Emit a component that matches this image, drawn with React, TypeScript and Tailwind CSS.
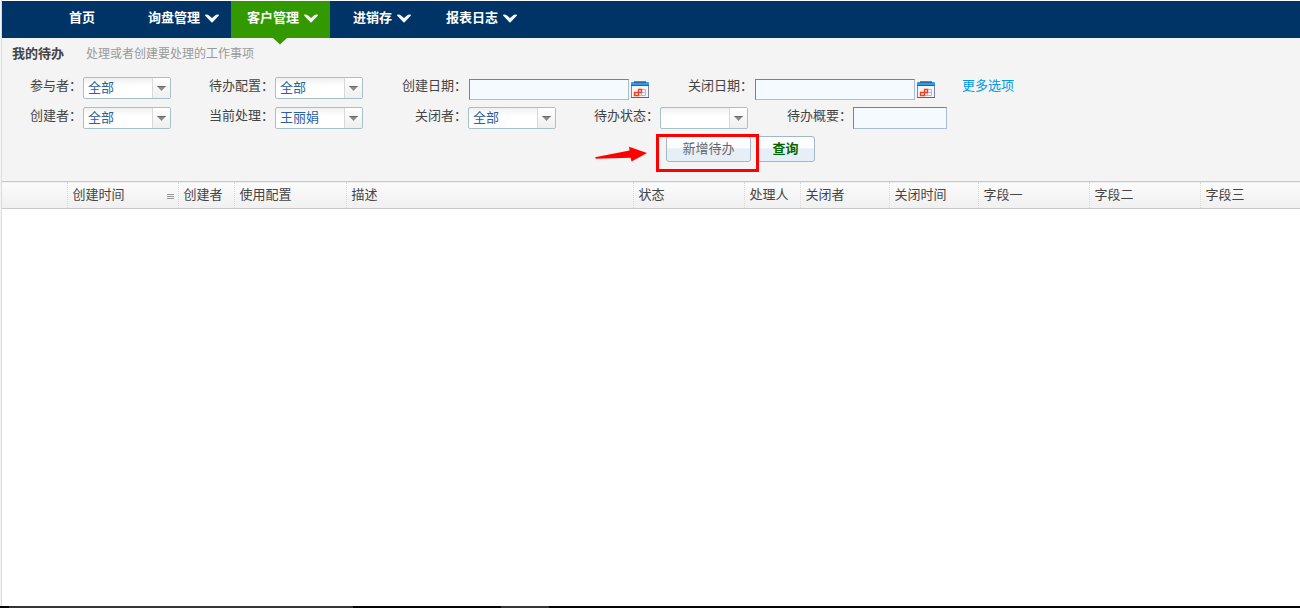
import { useState } from "react";
import type { ReactNode } from "react";

const navItems = [
    { label: "首页", menu: false, active: false, className: "w-[79px] pl-4" },
    { label: "询盘管理", menu: true, active: false, className: "w-[99px] pl-4" },
    { label: "客户管理", menu: true, active: true, className: "w-[99px] pl-4 bg-[#339900]" },
    { label: "进销存", menu: true, active: false, className: "w-[93px] pl-[23px]" },
    { label: "报表日志", menu: true, active: false, className: "w-[106px] pl-[23px]" },
];

const columns = [
    { label: "", width: "w-[65px]" },
    { label: "创建时间", width: "w-[111px]", menu: true },
    { label: "创建者", width: "w-[56px]" },
    { label: "使用配置", width: "w-[112px]" },
    { label: "描述", width: "w-[287px]" },
    { label: "状态", width: "w-[111px]" },
    { label: "处理人", width: "w-[56px]" },
    { label: "关闭者", width: "w-[89px]" },
    { label: "关闭时间", width: "w-[89px]" },
    { label: "字段一", width: "w-[111px]" },
    { label: "字段二", width: "w-[111px]" },
    { label: "字段三", width: "w-auto" },
];

const Chevron = () => (
    <svg viewBox="0 0 14 9" className="w-[14px] h-[9px]" fill="#f4f7fa">
        <path d="M0 1.4Q0 .4 1.4 .6Q3 .6 4 1.6L7 4L10 1.6Q11 .6 12.6 .6Q14 .4 14 1.4L7.6 8.2Q7 8.8 6.4 8.2Z" />
    </svg>
);

const CalendarIcon = () => (
    <svg viewBox="0 0 18 17" className="w-[18px] h-[17px]">
        <rect x="0.5" y="3.5" width="17" height="13" fill="#f3f5fa" stroke="#7f8798" />
        <rect x="0" y="1" width="18" height="4" rx="1" fill="#2a9cf0" />
        <rect x="0" y="4" width="18" height="1" fill="#1464b8" />
        <path d="M3 1h12" stroke="#3d4f66" strokeWidth="1.4" />
        <path d="M0 16.5h18" stroke="#5d6474" />
        <path d="M10.5 8.5h4v6h-7M7.5 11.5h7M10.5 8.5v6" fill="none" stroke="#b4bccb" />
        <path d="M7 8.5h3.5v3H3.5v3h4v-6" fill="none" stroke="#f4401f" strokeWidth="1.4" />
    </svg>
);

interface FieldProps {
    id: string;
    label: string;
    children: ReactNode;
}

const Field = ({ id, label, children }: FieldProps) => (
    <div className="flex items-start">
        <label htmlFor={id} className="w-[66px] pr-px text-right leading-[18px] whitespace-nowrap">
            {label}：
        </label>
        {children}
    </div>
);

interface PickerProps {
    id: string;
    options: string[];
}

const Picker = ({ id, options }: PickerProps) => {
    const [value, setValue] = useState(options[0]);

    return (
        <div className="relative w-[88px] h-[22px]">
            <select
                id={id}
                value={value}
                onChange={(e) => setValue(e.target.value)}
                className="block w-full h-full appearance-none rounded-[2px] border border-[#a6c0cc] pl-1 pr-5 leading-5 text-[#2a609c] bg-linear-to-b from-[#f0f0f0] via-white via-40% to-white outline-none"
            >
                {options.map((o) => (
                    <option key={o}>{o}</option>
                ))}
            </select>
            <span className="pointer-events-none absolute top-px right-px bottom-px w-[18px] border-l border-[#d9d9d9] bg-linear-to-b from-white to-[#efefef] flex items-center justify-center">
                <svg viewBox="0 0 9 5" className="w-[9px] h-[5px] mt-px">
                    <path d="M0 0h9L4.5 5z" fill="#8a8a8a" />
                    <path d="M0 0h9l-1 1H1z" fill="#666" />
                </svg>
            </span>
        </div>
    );
};

const inputClass =
    "border border-t-[#76838f] border-l-[#76838f] border-r-[#a9bed3] border-b-[#a9bed3] bg-[#f5faff] px-1 outline-none";

const DateInput = ({ id }: { id: string }) => (
    <div className="flex items-start pt-[2px] pl-px gap-[2px]">
        <input id={id} type="text" className={`w-[160px] h-[21px] ${inputClass}`} />
        <button type="button" aria-label="选择日期" className="pt-[2px]">
            <CalendarIcon />
        </button>
    </div>
);

const buttonClass =
    "h-[26px] rounded-[3px] border border-[#a3b5c6] bg-linear-to-b from-[#fbfdff] from-45% to-[#e6eef7] to-50%";

const App = () => {
    return (
        <div
            className="min-h-screen flex flex-col bg-white text-[13px] text-[#444]"
            style={{ fontFamily: '"Liberation Sans", "Noto Sans CJK SC", sans-serif' }}
        >
            <div className="flex-1 flex flex-col border-l border-[#f4f4f4]">
                <div className="flex-1 border-l border-[#dcdcdc] pt-px">
                    <nav className="h-[37px] bg-[#003366] pl-[51px] flex font-bold text-white">
                        {navItems.map((item) => (
                            <a
                                key={item.label}
                                href="#"
                                className={`relative shrink-0 h-full pb-[3px] flex items-center gap-[5px] ${item.className}`}
                            >
                                {item.label}
                                {item.menu && <Chevron />}
                                {item.active && (
                                    <svg viewBox="0 0 14 7" className="absolute top-full left-[42px] w-[14px] h-[7px]" fill="#339900">
                                        <path d="M0 0h14L7 6.5z" />
                                    </svg>
                                )}
                            </a>
                        ))}
                    </nav>

                    <section className="bg-[#f4f4f4] h-[143px]">
                        <header className="flex items-center pl-[10px] gap-[22px] h-8">
                            <h1 className="font-bold">我的待办</h1>
                            <p className="text-xs text-[#999]">处理或者创建要处理的工作事项</p>
                        </header>

                        <form onSubmit={(e) => e.preventDefault()} className="pl-[15px] pt-[7px]">
                            <div className="grid grid-cols-[192px_193px_286px_274px_auto] h-[30px]">
                                <Field id="member" label="参与者">
                                    <Picker id="member" options={["全部"]} />
                                </Field>
                                <Field id="config" label="待办配置">
                                    <Picker id="config" options={["全部"]} />
                                </Field>
                                <Field id="created" label="创建日期">
                                    <DateInput id="created" />
                                </Field>
                                <Field id="closed" label="关闭日期">
                                    <DateInput id="closed" />
                                </Field>
                                <a href="#" className="justify-self-start leading-[18px] text-[#0099e8]">更多选项</a>
                            </div>
                            <div className="grid grid-cols-[192px_193px_192px_193px_auto] h-[30px]">
                                <Field id="creator" label="创建者">
                                    <Picker id="creator" options={["全部"]} />
                                </Field>
                                <Field id="handler" label="当前处理">
                                    <Picker id="handler" options={["王丽娟", "全部"]} />
                                </Field>
                                <Field id="closer" label="关闭者">
                                    <Picker id="closer" options={["全部"]} />
                                </Field>
                                <Field id="status" label="待办状态">
                                    <Picker id="status" options={[""]} />
                                </Field>
                                <Field id="summary" label="待办概要">
                                    <input id="summary" type="text" className={`w-[94px] h-[22px] ${inputClass}`} />
                                </Field>
                            </div>
                            <div className="relative flex gap-[5px] pl-[649px] -mt-px">
                                <button type="button" className={`w-[85px] text-[#666] ${buttonClass}`}>新增待办</button>
                                <button type="submit" className={`w-[59px] font-bold text-[#006600] ${buttonClass}`}>查询</button>
                                {/* highlight around the add button */}
                                <span className="pointer-events-none absolute left-[639px] -top-[2px] w-[103px] h-[38px] border-3 border-[#ff0000]" />
                                <svg viewBox="0 0 52 16" className="pointer-events-none absolute left-[578px] top-[10px] w-[52px] h-[16px]" fill="#ff0000">
                                    <path d="M0 11.3L34.5 4.4L34 0.8L52 7L36.5 15.6L35.6 11.8L1 12.8Z" />
                                </svg>
                            </div>
                        </form>
                    </section>

                    <table className="w-full table-fixed border-collapse">
                        <thead>
                            <tr className="h-[27px] border-t border-b border-t-[#c6c6c6] border-b-[#c9c9c9] bg-linear-to-b from-[#fbfbfb] to-[#f0f0f0]">
                                {columns.map((col) => (
                                    <th
                                        key={col.label}
                                        className={`${col.width} border-r border-dotted border-r-[#d8d8d8] last:border-r-0 p-0 pl-[5px] pb-px text-left font-normal whitespace-nowrap`}
                                    >
                                        <div className="flex items-center justify-between pr-1 leading-[18px]">
                                            {col.label}
                                            {col.menu && (
                                                <svg viewBox="0 0 7 7" className="w-[7px] h-[7px] mt-[3px]" stroke="#999">
                                                    <path d="M0 1.5h7M0 3.5h7M0 5.5h7" />
                                                </svg>
                                            )}
                                        </div>
                                    </th>
                                ))}
                            </tr>
                        </thead>
                        <tbody />
                    </table>
                </div>
            </div>
            <footer className="h-[2px] flex bg-[#050505]">
                <span className="ml-[9px] w-[344px] bg-[#353535]" />
                <span className="ml-[148px] w-[48px] bg-[#353535]" />
            </footer>
        </div>
    );
};

export default App;
